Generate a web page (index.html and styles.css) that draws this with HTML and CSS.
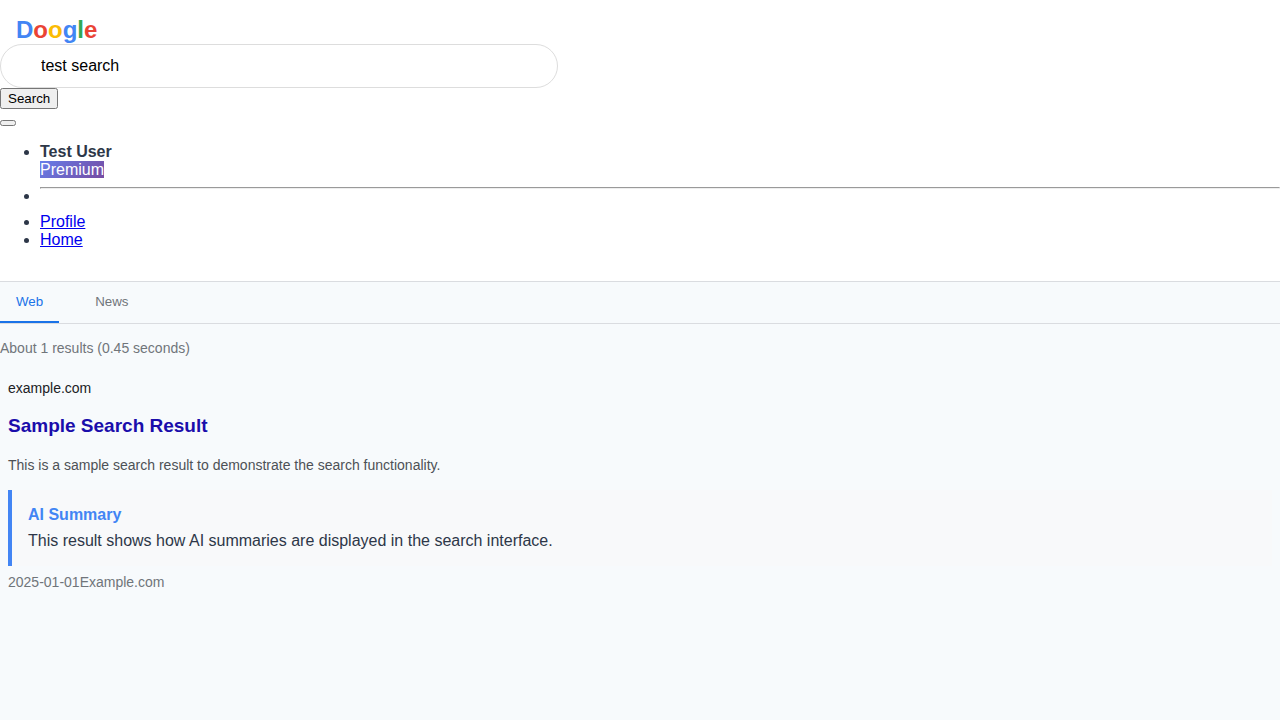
FILE: index.html
```html
<!DOCTYPE html>
<html lang="en">
<head>
<meta charset="utf-8">
<title>test search - Doogle</title>
<link rel="stylesheet" href="styles.css">
</head>
<body>
<header class="header">
  <a class="logo" href="#"><span class="blue">D</span><span class="red">o</span><span class="yellow">o</span><span class="blue">g</span><span class="green">l</span><span class="red">e</span></a>
  <form class="search-form">
    <input class="search-input" type="text" value="test search" aria-label="Search query">
    <div class="search-action"><button type="submit">Search</button></div>
  </form>
  <div class="user-menu">
    <button class="menu-toggle" type="button" aria-label="User menu"></button>
    <ul class="menu">
      <li><strong>Test User</strong><br><span class="badge">Premium</span></li>
      <li><hr></li>
      <li><a href="#">Profile</a></li>
      <li><a href="#">Home</a></li>
    </ul>
  </div>
</header>
<nav class="tabs">
  <button class="tab active" type="button">Web</button>
  <button class="tab" type="button">News</button>
</nav>
<main>
  <p class="stats">About 1 results (0.45 seconds)</p>
  <article class="result">
    <div class="result-url">example.com</div>
    <h3 class="result-title">Sample Search Result</h3>
    <p class="result-text">This is a sample search result to demonstrate the search functionality.</p>
    <section class="summary">
      <h4 class="summary-title">AI Summary</h4>
      <p class="summary-text">This result shows how AI summaries are displayed in the search interface.</p>
    </section>
    <div class="result-meta"><span>2025-01-01</span><span>Example.com</span></div>
  </article>
</main>
</body>
</html>
```

FILE: styles.css
```css
body {
  margin: 0;
  background: #f7fafc;
  color: #2d3748;
  font-family: "Liberation Sans", Arial, sans-serif;
  font-size: 16px;
}

.header {
  padding: 16px 0;
  background: #fff;
  border-bottom: 1px solid #dadce0;
}

.logo {
  display: block;
  margin-left: 16px;
  font-size: 24px;
  font-weight: 700;
  line-height: 28px;
  text-decoration: none;
}

.blue { color: #4285f4; }
.red { color: #ea4335; }
.yellow { color: #fbbc05; }
.green { color: #34a853; }

.search-input {
  display: block;
  box-sizing: border-box;
  width: 100%;
  max-width: 558px;
  height: 44px;
  padding: 0 40px;
  border: 1px solid #ddd;
  border-radius: 24px;
  background: #fff;
  color: #000;
  font: inherit;
}

.search-action {
  line-height: 18px;
  height: 21px;
}

.menu {
  margin: 16px 0;
  padding-left: 40px;
}

.badge {
  background: linear-gradient(135deg, #667eea, #764ba2);
  color: #fff;
}

.tabs {
  display: flex;
  gap: 20px;
  border-bottom: 1px solid #dadce0;
}

.tab {
  padding: 12px 16px;
  border: 0;
  border-bottom: 2px solid transparent;
  background: none;
  color: #70757a;
}

.tab.active {
  border-bottom-color: #1a73e8;
  color: #1a73e8;
}

.stats {
  margin: 16px 0;
  color: #70757a;
  font-size: 14px;
}

.result {
  padding: 8px;
}

.result-url {
  color: #202124;
  font-size: 14px;
}

.result-title {
  margin: 19px 0;
  color: #1a0dab;
  font-size: 19px;
}

.result-text {
  margin: 16px 0;
  color: #4d5156;
  font-size: 14px;
  line-height: 18px;
}

.summary {
  margin-bottom: 8px;
  padding: 16px;
  border-left: 4px solid #4285f4;
  background: #f8f9fa;
}

.summary-title {
  margin: 0 0 8px;
  color: #4285f4;
  font-size: 16px;
}

.summary-text {
  margin: 0;
}

.result-meta {
  color: #70757a;
  font-size: 14px;
}
```
